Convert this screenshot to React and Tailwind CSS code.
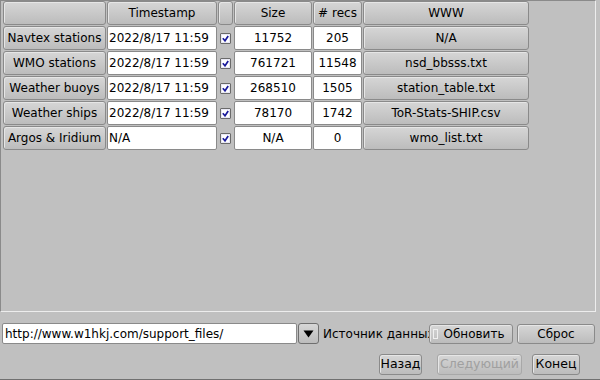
import React from 'react';

const rows = [
  { label: 'Navtex stations', ts: '2022/8/17 11:59', size: '11752', recs: '205', www: 'N/A' },
  { label: 'WMO stations', ts: '2022/8/17 11:59', size: '761721', recs: '11548', www: 'nsd_bbsss.txt' },
  { label: 'Weather buoys', ts: '2022/8/17 11:59', size: '268510', recs: '1505', www: 'station_table.txt' },
  { label: 'Weather ships', ts: '2022/8/17 11:59', size: '78170', recs: '1742', www: 'ToR-Stats-SHIP.csv' },
  { label: 'Argos & Iridium', ts: 'N/A', size: 'N/A', recs: '0', www: 'wmo_list.txt' },
];

function Btn({ children, className = '' }) {
  return (
    <div className={`flex items-center justify-center whitespace-nowrap rounded-[3px] border border-[#8a8a8a] bg-gradient-to-b from-[#d6d6d6] to-[#bcbcbc] shadow-[inset_1px_1px_0_#e6e6e6] ${className}`}>
      {children}
    </div>
  );
}

function Field({ children, className = '' }) {
  return (
    <div className={`flex items-center whitespace-nowrap rounded-[2px] border border-[#8a8a8a] bg-white ${className}`}>
      {children}
    </div>
  );
}

function Check() {
  return (
    <div className="flex items-center justify-center pt-[1px]">
      <div className="w-[11px] h-[11px] border border-[#6a6a6a] bg-white rounded-[1px] flex items-center justify-center shadow-[inset_0_0_0_1px_#e8e8f4]">
        <svg width="7" height="7" viewBox="0 0 7 7">
          <path d="M0.8 3.2 L3 5.8 L6.2 1" fill="none" stroke="#1a1a9c" strokeWidth="1.7" />
        </svg>
      </div>
    </div>
  );
}

export default function App() {
  return (
    <div className="w-[600px] h-[380px] bg-[#c0c0c0] flex flex-col text-[12px] text-black font-['DejaVu_Sans',sans-serif] border-b border-[#707070]">
      {/* table panel */}
      <div className="h-[312px] w-[596px] border border-[#8a8a8a] border-b-[#ededed] border-r-[#ededed] pl-[2px]">
        <div className="grid grid-cols-[103px_110px_15px_78px_49px_166px] grid-rows-[24px_repeat(5,24px)] gap-[1px]">
          <Btn />
          <Btn>Timestamp</Btn>
          <Btn />
          <Btn>Size</Btn>
          <Btn># recs</Btn>
          <Btn>WWW</Btn>
          {rows.map((r) => (
            <React.Fragment key={r.label}>
              <Btn>{r.label}</Btn>
              <Field className="pl-[1px]">{r.ts}</Field>
              <Check />
              <Field className="justify-center">{r.size}</Field>
              <Field className="justify-center">{r.recs}</Field>
              <Btn>{r.www}</Btn>
            </React.Fragment>
          ))}
        </div>
      </div>

      {/* source row */}
      <div className="flex items-center mt-[11px] pl-[2px] h-[21px]">
        <Field className="w-[295px] h-[21px] pl-[2px]">http://www.w1hkj.com/support_files/</Field>
        <div className="ml-[1px] w-[21px] h-[21px] rounded-[3px] border border-[#6f6f6f] bg-gradient-to-b from-[#d6d6d6] to-[#bcbcbc] flex items-center justify-center">
          <svg width="11" height="8" viewBox="0 0 11 8">
            <path d="M0.5 0.5 L10.5 0.5 L5.5 7.5 Z" fill="#000" />
          </svg>
        </div>
        <div className="ml-[4px] w-[106px] overflow-hidden whitespace-nowrap">Источник данных:</div>
        <Btn className="relative w-[84px] h-[20px] border-[#6f6f6f] pl-[6px]">
          <div className="absolute left-[3px] top-[4px] w-[5px] h-[10px] border border-[#f0f0f0]" />
          Обновить
        </Btn>
        <Btn className="ml-[4px] w-[78px] h-[20px] border-[#6f6f6f]">Сброс</Btn>
      </div>

      {/* nav row */}
      <div className="flex items-center justify-end mt-[10px] pr-[20px] text-[12.5px]">
        <Btn className="w-[43px] h-[21px] border-[#5a5a5a]">Назад</Btn>
        <Btn className="ml-[15px] w-[85px] h-[21px] border-[#a8a8a8] text-[#a0a0a0]">Следующий</Btn>
        <Btn className="ml-[10px] w-[48px] h-[21px] border-[#5a5a5a]">Конец</Btn>
      </div>
    </div>
  );
}
